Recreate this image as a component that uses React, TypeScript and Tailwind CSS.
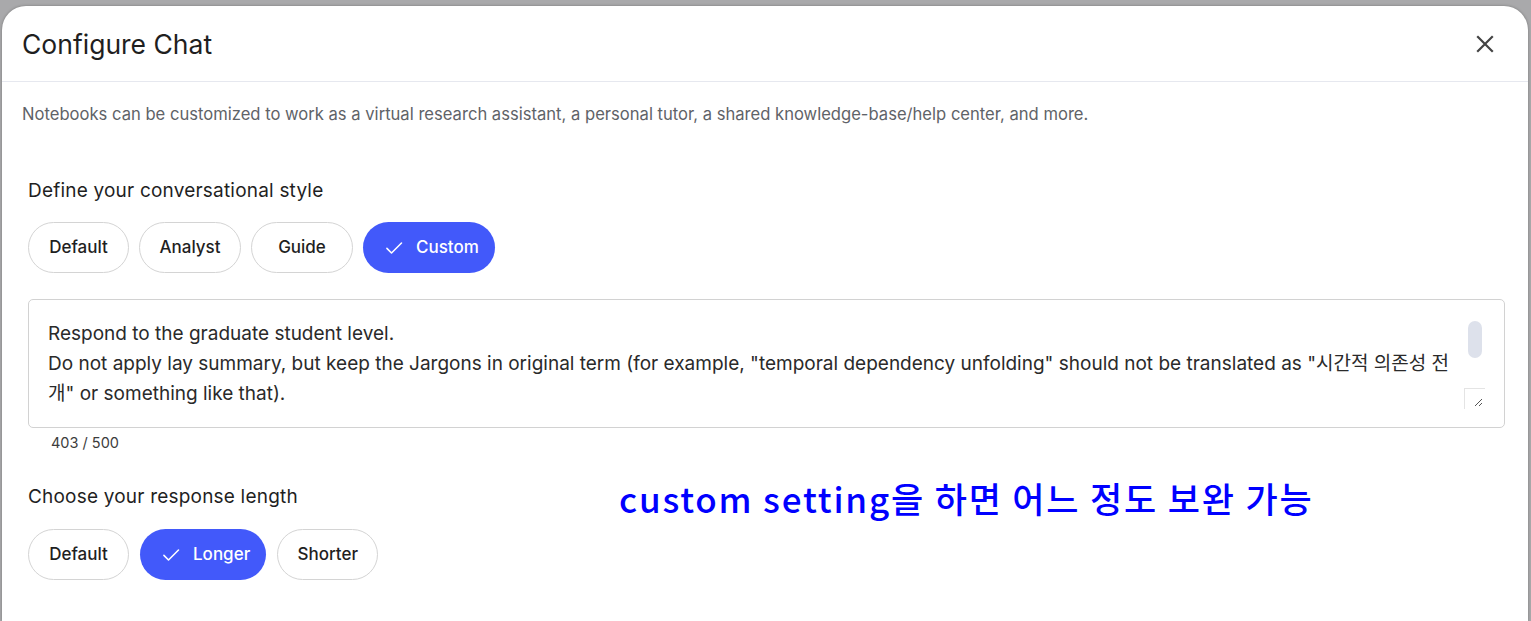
import React from "react";

const Check = () => (
  <svg width="20" height="20" viewBox="0 0 24 24" fill="none" stroke="currentColor" strokeWidth="1.9" strokeLinecap="round" strokeLinejoin="round">
    <path d="M3.5 12.5l5.5 5.5L21 6" />
  </svg>
);

function Chip({ label, active }: { label: string; active?: boolean }) {
  if (active) {
    return (
      <div className="h-[51px] rounded-full bg-[#4259fa] text-white flex items-center pl-[21px] pr-[16px] gap-[12px] text-[17px] font-medium">
        <Check />
        <span>{label}</span>
      </div>
    );
  }
  return (
    <div className="h-[51px] rounded-full border border-[#d4d4d4] bg-white text-[#1f1f1f] flex items-center justify-center text-[17px] font-medium">
      {label}
    </div>
  );
}

export default function App() {
  return (
    <div
      className="w-[1531px] h-[621px] bg-[#a9a9ab] pt-[6px] pl-[2px] pr-[3px] overflow-hidden"
      style={{ fontFamily: "Inter, 'Noto Sans CJK KR', sans-serif" }}
    >
      <div className="relative bg-white rounded-t-[24px] h-full flex flex-col shadow-[0_0_3px_rgba(0,0,0,0.3)]">
        <div className="h-[75px] flex items-center justify-between pl-[20px] pr-[34px]">
          <div className="text-[26.5px] text-[#1f1f1f] pt-[2px]">Configure Chat</div>
          <svg width="18" height="18" viewBox="0 0 18 18" stroke="#444" strokeWidth="2.2" strokeLinecap="square">
            <path d="M2 2L16 16M16 2L2 16" />
          </svg>
        </div>
        <div className="h-px bg-[#e6e8ef]" />
        <div className="pl-[20px] pt-[22px] text-[16.6px] leading-[20px] text-[#5f6368]">
          Notebooks can be customized to work as a virtual research assistant, a personal tutor, a shared knowledge-base/help center, and more.
        </div>
        <div className="pl-[26px] pr-[23px]">
          <div className="mt-[55px] text-[19px] leading-[24px] text-[#1f1f1f] tracking-[0.2px]">Define your conversational style</div>
          <div className="mt-[19px] flex gap-[10px]">
            <div className="w-[101px]"><Chip label="Default" /></div>
            <div className="w-[102px]"><Chip label="Analyst" /></div>
            <div className="w-[102px]"><Chip label="Guide" /></div>
            <Chip label="Custom" active />
          </div>
          <div className="mt-[26px] h-[129px] border border-[#d2d2d2] rounded-[5px] relative pl-[19px] pr-[40px] pt-[19px] text-[19px] leading-[30px] text-[#2a2a2a]">
            <div>Respond to the graduate student level.</div>
            <div>
              Do not apply lay summary, but keep the Jargons in original term (for example, "temporal dependency unfolding" should not be translated as "시간적 의존성 전개" or something like that).
            </div>
            <div className="absolute right-[22px] top-[21px] w-[14px] h-[37px] rounded-full bg-[#dde1eb]" />
            <div className="absolute right-[19px] top-[88px] w-[21px] h-[21px] border-l border-t border-[#e4e4e4] flex items-end justify-end pr-[2px] pb-[2px]">
              <svg width="9" height="9" viewBox="0 0 9 9" stroke="#555" strokeWidth="1">
                <path d="M1 8L8 1M5 8L8 5" />
              </svg>
            </div>
          </div>
          <div className="mt-[7px] pl-[23px] text-[14.5px] leading-[16px] text-[#3c3c3c]">403 / 500</div>
          <div className="mt-[34px] text-[19px] leading-[24px] text-[#1f1f1f] tracking-[0.2px]">Choose your response length</div>
          <div className="mt-[20px] flex gap-[11px]">
            <div className="w-[101px]"><Chip label="Default" /></div>
            <Chip label="Longer" active />
            <div className="w-[101px]"><Chip label="Shorter" /></div>
          </div>
        </div>
        <div
          className="absolute left-[617px] top-[468px] text-[35px] leading-[48px] font-medium text-[#0000ff] tracking-[1.8px] whitespace-nowrap"
          style={{ fontFamily: "'Noto Sans CJK KR', sans-serif" }}
        >
          custom setting을 하면 어느 정도 보완 가능
        </div>
      </div>
    </div>
  );
}
